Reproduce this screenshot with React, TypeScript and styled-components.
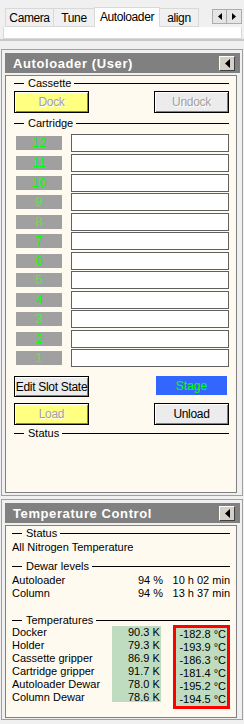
import styled, { createGlobalStyle } from 'styled-components';

const GlobalStyle = createGlobalStyle`
  html, body {
    margin: 0;
    padding: 0;
    background: #f0f0f0;
  }
  body {
    font-family: 'Liberation Sans', Arial, sans-serif;
    font-size: 11px;
    color: #000;
  }
`;

const Screen = styled.div`
  width: 244px;
  height: 724px;
  overflow: hidden;
  display: flex;
  flex-direction: column;
`;

const TabStrip = styled.div`
  height: 27px;
  display: flex;
  align-items: flex-end;
  padding-left: 5px;
  box-sizing: border-box;
`;

const Tab = styled.div<{ $active?: boolean; $w: number }>`
  width: ${(p) => p.$w}px;
  height: ${(p) => (p.$active ? 20 : 19)}px;
  box-sizing: border-box;
  border: 1px solid #d9d9d9;
  border-bottom: ${(p) => (p.$active ? 'none' : '1px solid #d9d9d9')};
  margin-left: -1px;
  background: ${(p) => (p.$active ? '#fff' : '#f0f0f0')};
  font-size: 12px;
  letter-spacing: -0.4px;
  display: flex;
  align-items: ${(p) => (p.$active ? 'flex-start' : 'center')};
  padding-top: ${(p) => (p.$active ? 2 : 1)}px;
  justify-content: center;
  position: relative;
  z-index: ${(p) => (p.$active ? 1 : 0)};
  &:first-child {
    margin-left: 0;
  }
`;

const Arrows = styled.div`
  margin-left: auto;
  align-self: flex-start;
  margin-top: 9px;
  margin-right: 2px;
  display: flex;
`;

const ArrowBtn = styled.div`
  width: 15px;
  height: 15px;
  box-sizing: border-box;
  border: 1px solid #adadad;
  background: #e5e5e5;
  display: flex;
  align-items: center;
  justify-content: center;
  & + & {
    border-left: none;
  }
`;

const TabBody = styled.div`
  height: 12px;
  margin: 0 2px 0 3px;
  background: #fff;
  border: 1px solid #d9d9d9;
  border-top: none;
  box-sizing: border-box;
`;

const Shade = styled.div`
  height: 2px;
  background: #c8c8c8;
  margin-bottom: 8px;
`;

const Panel = styled.div<{ $h: number; $mt?: number }>`
  margin-left: 1px;
  margin-top: ${(p) => p.$mt ?? 0}px;
  width: 242px;
  height: ${(p) => p.$h}px;
  box-sizing: border-box;
  border: 1px solid #a0a0a0;
  padding: 3px 2px 0 3px;
  display: flex;
  flex-direction: column;
`;

const Header = styled.div`
  height: 20px;
  background: #808080;
  color: #fff;
  font-weight: bold;
  font-size: 13px;
  letter-spacing: 0.6px;
  display: flex;
  align-items: center;
  padding-left: 8px;
  padding-right: 5px;
  flex-shrink: 0;
`;

const Collapse = styled.div`
  margin-left: auto;
  width: 16px;
  height: 15px;
  box-sizing: border-box;
  background: #d4d0c8;
  border: 1px solid;
  border-color: #fff #404040 #404040 #fff;
  display: flex;
  align-items: center;
  justify-content: center;
`;

const Content = styled.div<{ $h: number; $px: number; $pr: number }>`
  margin-top: 2px;
  width: 232px;
  height: ${(p) => p.$h}px;
  box-sizing: border-box;
  background: #fffaf0;
  border: 1px solid #808080;
  padding: 1px ${(p) => p.$pr}px 0 ${(p) => p.$px}px;
  display: flex;
  flex-direction: column;
`;

const Group = styled.div<{ $mt?: number }>`
  height: 12px;
  margin-top: ${(p) => p.$mt ?? 0}px;
  display: flex;
  align-items: center;
  line-height: 12px;
  &::before {
    content: '';
    width: 10px;
    height: 1px;
    background: #000;
    margin-right: 4px;
  }
  &::after {
    content: '';
    flex: 1;
    height: 1px;
    background: #000;
    margin-left: 3px;
  }
`;

const ButtonRow = styled.div<{ $mt: number }>`
  margin-top: ${(p) => p.$mt}px;
  display: flex;
  justify-content: space-between;
  align-items: flex-start;
`;

const Button = styled.div<{ $bg?: string; $disabled?: boolean }>`
  width: 75px;
  height: 22px;
  box-sizing: border-box;
  border: 1px solid #000;
  box-shadow: inset 1px 1px #fff, inset -1px -1px #808080;
  background: ${(p) => p.$bg ?? '#ececec'};
  color: ${(p) => (p.$disabled ? '#a0a0a0' : '#000')};
  text-shadow: ${(p) => (p.$disabled ? '1px 1px #fff' : 'none')};
  font-size: 12px;
  letter-spacing: -0.3px;
  display: flex;
  align-items: center;
  justify-content: center;
`;

const StageBox = styled.div`
  width: 71px;
  height: 19px;
  margin-right: 2px;
  background: #3366ff;
  color: #00ff00;
  font-size: 12px;
  display: flex;
  align-items: center;
  justify-content: center;
`;

const SlotList = styled.div`
  margin-top: 5px;
  display: flex;
  flex-direction: column;
`;

const SlotRow = styled.div<{ $h: number }>`
  height: ${(p) => p.$h}px;
  display: flex;
  align-items: flex-start;
`;

const SlotTag = styled.div<{ $dim?: boolean }>`
  width: 46px;
  height: 14px;
  margin: 2px 9px 0 2px;
  background: #a0a0a0;
  color: ${(p) => (p.$dim ? '#4fe84f' : '#00ff00')};
  font-size: 13px;
  line-height: 14px;
  text-align: center;
`;

const SlotField = styled.div`
  flex: 1;
  height: 18px;
  box-sizing: border-box;
  background: #fff;
  border: 1px solid #606060;
`;

const Line = styled.div<{ $mt?: number }>`
  margin-top: ${(p) => p.$mt ?? 0}px;
  height: 13px;
  line-height: 13px;
  white-space: nowrap;
`;

const ValueGrid = styled.div<{ $mt?: number }>`
  margin-top: ${(p) => p.$mt ?? 0}px;
  display: grid;
  grid-template-columns: 1fr 50px 67px;
  grid-auto-rows: 13px;
  line-height: 13px;
  & > :nth-child(3n + 2),
  & > :nth-child(3n) {
    text-align: right;
  }
`;

const TempWrap = styled.div`
  margin-top: 0;
  display: flex;
  align-items: flex-start;
`;

const TempCol = styled.div`
  display: flex;
  flex-direction: column;
  line-height: 13px;
`;

const LabelCol = styled(TempCol)`
  width: 101px;
`;

const KelvinCol = styled(TempCol)`
  width: 50px;
  height: 76px;
  box-sizing: border-box;
  background: #c0dcc0;
  text-align: right;
  padding-right: 1px;
`;

const CelsiusCol = styled(TempCol)`
  width: 58px;
  height: 84px;
  margin-top: -1px;
  margin-left: 12px;
  box-sizing: border-box;
  border: 3px solid #ff0000;
  background: #c0dcc0;
  text-align: right;
  padding-right: 1px;
`;

const TriLeft = ({ size = 4 }: { size?: number }) => (
  <svg width={size + 1} height={size * 2 + 1} viewBox={`0 0 ${size + 1} ${size * 2 + 1}`}>
    <polygon points={`${size + 1},0 ${size + 1},${size * 2 + 1} 0,${size + 0.5}`} fill="#000" />
  </svg>
);

const TriRight = ({ size = 3 }: { size?: number }) => (
  <svg width={size + 1} height={size * 2 + 1} viewBox={`0 0 ${size + 1} ${size * 2 + 1}`}>
    <polygon points={`0,0 0,${size * 2 + 1} ${size + 1},${size + 0.5}`} fill="#000" />
  </svg>
);

const slots = [
  { n: 12, dim: false },
  { n: 11, dim: false },
  { n: 10, dim: false },
  { n: 9, dim: true },
  { n: 8, dim: true },
  { n: 7, dim: false },
  { n: 6, dim: false },
  { n: 5, dim: true },
  { n: 4, dim: false },
  { n: 3, dim: true },
  { n: 2, dim: false },
  { n: 1, dim: true },
];

const temps = [
  { name: 'Docker', k: '90.3 K', c: '-182.8 °C' },
  { name: 'Holder', k: '79.3 K', c: '-193.9 °C' },
  { name: 'Cassette gripper', k: '86.9 K', c: '-186.3 °C' },
  { name: 'Cartridge gripper', k: '91.7 K', c: '-181.4 °C' },
  { name: 'Autoloader Dewar', k: '78.0 K', c: '-195.2 °C' },
  { name: 'Column Dewar', k: '78.6 K', c: '-194.5 °C' },
];

const App = () => {
  return (
    <Screen>
      <GlobalStyle />
      <TabStrip>
        <Tab $w={49}>Camera</Tab>
        <Tab $w={42}>Tune</Tab>
        <Tab $w={66} $active>
          Autoloader
        </Tab>
        <Tab $w={40}>align</Tab>
        <Arrows>
          <ArrowBtn>
            <TriLeft size={3} />
          </ArrowBtn>
          <ArrowBtn>
            <TriRight size={3} />
          </ArrowBtn>
        </Arrows>
      </TabStrip>
      <TabBody />
      <Shade />

      <Panel $h={447}>
        <Header>
          Autoloader (User)
          <Collapse>
            <TriLeft size={4} />
          </Collapse>
        </Header>
        <Content $h={418} $px={8} $pr={7}>
          <Group>Cassette</Group>
          <ButtonRow $mt={2}>
            <Button $bg="#ffff80" $disabled>
              Dock
            </Button>
            <Button $disabled>Undock</Button>
          </ButtonRow>
          <Group $mt={4}>Cartridge</Group>
          <SlotList>
            {slots.map((s, i) => (
              <SlotRow key={s.n} $h={i < 2 || i % 2 === 1 ? 20 : 19}>
                <SlotTag $dim={s.dim}>{s.n}</SlotTag>
                <SlotField />
              </SlotRow>
            ))}
          </SlotList>
          <ButtonRow $mt={7}>
            <Button style={{ height: 21 }}>Edit Slot State</Button>
            <StageBox>Stage</StageBox>
          </ButtonRow>
          <ButtonRow $mt={6}>
            <Button $bg="#ffff80" $disabled>
              Load
            </Button>
            <Button>Unload</Button>
          </ButtonRow>
          <Group $mt={2}>Status</Group>
        </Content>
      </Panel>

      <Panel $h={221} $mt={3}>
        <Header>
          Temperature Control
          <Collapse>
            <TriLeft size={4} />
          </Collapse>
        </Header>
        <Content $h={193} $px={6} $pr={6}>
          <Group>Status</Group>
          <Line $mt={2}>All Nitrogen Temperature</Line>
          <Group $mt={6}>Dewar levels</Group>
          <ValueGrid $mt={2}>
            <span>Autoloader</span>
            <span>94 %</span>
            <span>10 h 02 min</span>
            <span>Column</span>
            <span>94 %</span>
            <span>13 h 37 min</span>
          </ValueGrid>
          <Group $mt={14}>Temperatures</Group>
          <TempWrap>
            <LabelCol>
              {temps.map((t) => (
                <span key={t.name}>{t.name}</span>
              ))}
            </LabelCol>
            <KelvinCol>
              {temps.map((t) => (
                <span key={t.name}>{t.k}</span>
              ))}
            </KelvinCol>
            <CelsiusCol>
              {temps.map((t) => (
                <span key={t.name}>{t.c}</span>
              ))}
            </CelsiusCol>
          </TempWrap>
        </Content>
      </Panel>
    </Screen>
  );
};

export default App;
